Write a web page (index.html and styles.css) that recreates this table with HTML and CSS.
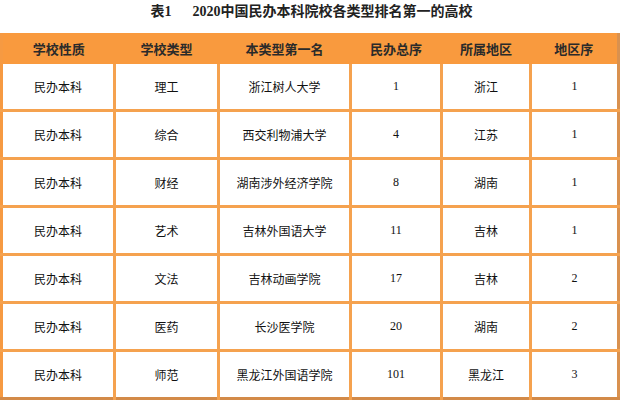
FILE: index.html
```html
<!DOCTYPE html>
<html lang="zh">
<head>
<meta charset="utf-8">
<link rel="stylesheet" href="styles.css">
</head>
<body>
<div class="title">表1&nbsp;&nbsp;&nbsp;&nbsp;&nbsp;&nbsp;2020中国民办本科院校各类型排名第一的高校</div>
<table class="rank">
<colgroup>
<col class="c1"><col class="c2"><col class="c3"><col class="c4"><col class="c5"><col class="c6">
</colgroup>
<thead>
<tr><th>学校性质</th><th>学校类型</th><th>本类型第一名</th><th>民办总序</th><th>所属地区</th><th>地区序</th></tr>
</thead>
<tbody>
<tr><td>民办本科</td><td>理工</td><td>浙江树人大学</td><td>1</td><td>浙江</td><td>1</td></tr>
<tr><td>民办本科</td><td>综合</td><td>西交利物浦大学</td><td>4</td><td>江苏</td><td>1</td></tr>
<tr><td>民办本科</td><td>财经</td><td>湖南涉外经济学院</td><td>8</td><td>湖南</td><td>1</td></tr>
<tr><td>民办本科</td><td>艺术</td><td>吉林外国语大学</td><td>11</td><td>吉林</td><td>1</td></tr>
<tr><td>民办本科</td><td>文法</td><td>吉林动画学院</td><td>17</td><td>吉林</td><td>2</td></tr>
<tr><td>民办本科</td><td>医药</td><td>长沙医学院</td><td>20</td><td>湖南</td><td>2</td></tr>
<tr><td>民办本科</td><td>师范</td><td>黑龙江外国语学院</td><td>101</td><td>黑龙江</td><td>3</td></tr>
</tbody>
</table>
</body>
</html>
```
FILE: styles.css
```css
html, body {
  margin: 0;
  padding: 0;
  background: #ffffff;
}
body {
  font-family: "Liberation Serif", "Noto Sans CJK SC", serif;
  color: #222;
  width: 621px;
}
.title {
  height: 33px;
  line-height: 24px;
  text-align: center;
  font-weight: bold;
  font-size: 14px;
  color: #222;
  padding-left: 2px;
}
.rank {
  width: 620px;
  table-layout: fixed;
  border-collapse: collapse;
  border-left: 3px solid #f69a42;
  border-right: 3px solid #d9914f;
  border-bottom: 3px solid #d38a48;
}
.c1 { width: 113px; }
.c2 { width: 104px; }
.c3 { width: 132px; }
.c4 { width: 91px; }
.c5 { width: 89px; }
.c6 { width: 88px; }
.rank th {
  background: #f99a3e;
  height: 31px;
  padding: 0;
  font-size: 13px;
  font-weight: bold;
  color: #2a2a2a;
  border: 0;
}
.rank td {
  height: 45px;
  padding: 0;
  text-align: center;
  font-size: 12px;
  color: #111;
  border: 3px solid #f5a24f;
}
.rank tbody tr:first-child td { border-top: 0; }
.rank tr td:first-child { border-left: 0; }
.rank tr td:last-child { border-right: 0; }
.rank tbody tr:last-child td { border-bottom: 0; }
```
